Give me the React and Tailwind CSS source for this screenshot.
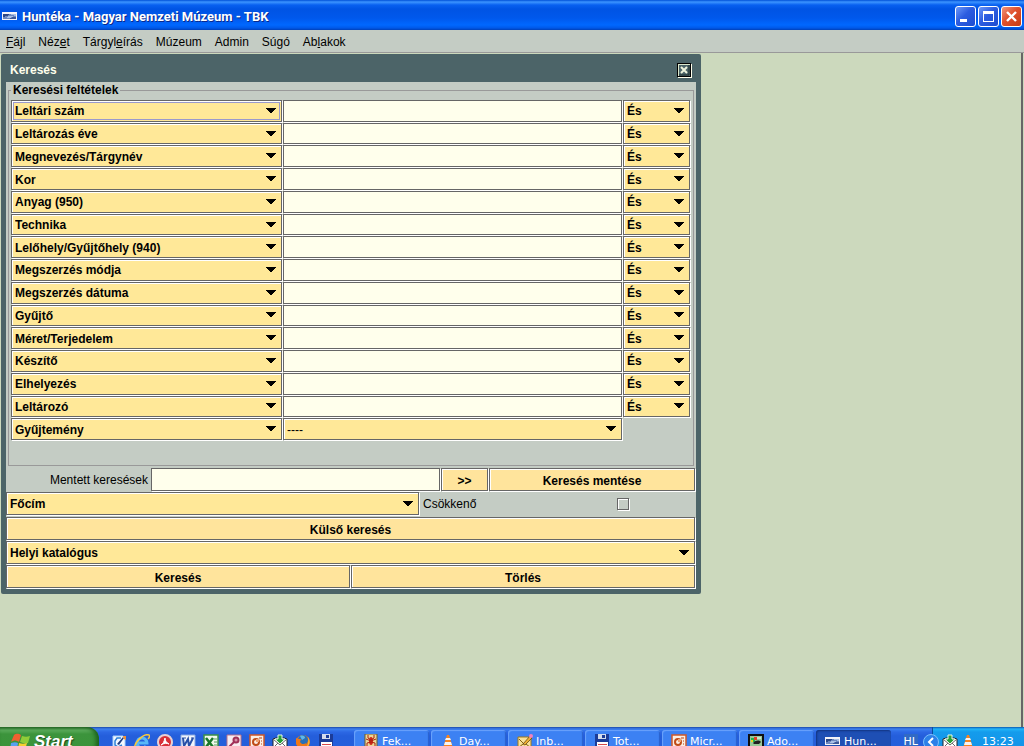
import React, { useState } from "react";

const fields = [
  "Leltári szám",
  "Leltározás éve",
  "Megnevezés/Tárgynév",
  "Kor",
  "Anyag (950)",
  "Technika",
  "Lelőhely/Gyűjtőhely (940)",
  "Megszerzés módja",
  "Megszerzés dátuma",
  "Gyűjtő",
  "Méret/Terjedelem",
  "Készítő",
  "Elhelyezés",
  "Leltározó",
];

// before / underlined mnemonic / after
const menus = [
  ["", "F", "ájl"],
  ["Néz", "e", "t"],
  ["Tárgyl", "e", "írás"],
  ["Múzeum", "", ""],
  ["Admin", "", ""],
  ["Súgó", "", ""],
  ["Ab", "l", "akok"],
];

const bevel =
  "border border-[#666666] shadow-[1px_1px_0_#ffffff,inset_1px_1px_0_#ffffff]";

const Combo = ({ value, label, className = "", weight = "font-bold", focused }) => (
  <div className={`relative min-h-0 ${className}`}>
    <select
      aria-label={label || value}
      defaultValue={value}
      className={`block h-full w-full appearance-none rounded-none bg-[#ffe898] pt-px pl-[3px] text-xs leading-4 text-black outline-none ${weight} ${bevel}`}
    >
      <option>{value}</option>
    </select>
    {focused && (
      <span className="pointer-events-none absolute inset-[2px] border border-[#9999cc]" />
    )}
    <svg
      className="pointer-events-none absolute top-1/2 right-[6px] -mt-[3px] h-[5px] w-[10px]"
      viewBox="0 0 10 5"
      shapeRendering="crispEdges"
    >
      <path d="M0 0h10v1H9v1H8v1H7v1H6v1H4V4H3V3H2V2H1V1H0z" fill="#000" />
    </svg>
  </div>
);

const TextBox = ({ label, className = "", id }) => (
  <input
    id={id}
    type="text"
    aria-label={label}
    className={`block h-full min-h-0 w-full min-w-0 rounded-none border border-[#666666] bg-[#ffffec] px-1 text-xs shadow-[1px_1px_0_#ffffff] outline-none ${className}`}
  />
);

const Button = ({ children, className = "" }) => (
  <button
    type="button"
    className={`h-[23px] bg-[#ffe49c] pt-[2px] text-xs leading-4 font-bold text-black ${bevel} ${className}`}
  >
    {children}
  </button>
);

const AppIcon = () => (
  <svg className="h-[9px] w-4 shrink-0" viewBox="0 0 16 9" shapeRendering="crispEdges">
    <path d="M0 0h15v8H0z" fill="#f4f4f8" />
    <path d="M1 2h13v5H1z" fill="#6c88c0" />
    <path d="M1 2h6v1H6v1H3v1H1z" fill="#2c4888" />
    <path d="M9 2h5v2h-2V3H9z" fill="#a8c0e4" />
    <path d="M6 4h5v1H9v1H5V5h1z" fill="#a8c0e4" />
    <path d="M10 5h4v2H8V6h2z" fill="#3c5898" />
  </svg>
);

const PageIcon = () => (
  <svg className="size-4 shrink-0" viewBox="0 0 16 16">
    <path d="M2 2h10l2 2v11H2z" fill="#f4f8ff" stroke="#a8d0f8" />
    <path d="M10 4H6L4 7v4l3 2 4-2" fill="none" stroke="#2c80d8" strokeWidth="1.500" />
    <path d="M6 10l6-7 1 1-5 7z" fill="#203c80" />
    <path d="M12 2h3v4l-2-1z" fill="#f09038" />
  </svg>
);

const IeIcon = () => (
  <svg className="size-4 shrink-0" viewBox="0 0 16 16">
    <path d="M3 9h10a5 5 0 1 0-1 3" fill="none" stroke="#58b8f8" strokeWidth="3" />
    <path d="M1 15C-1 10 9-1 15 1c1 1 0 3-1 4" fill="none" stroke="#f8c83c" strokeWidth="1.500" />
  </svg>
);

const AcrobatIcon = () => (
  <svg className="size-4 shrink-0" viewBox="0 0 16 16">
    <circle cx="8" cy="8" r="7" fill="#d83038" stroke="#e8d0d4" strokeWidth="2" />
    <path d="M8 4c-1 4-2 6-4 7 3-2 6-2 8-1-2-1-4-3-4-6z" fill="#fff" stroke="#fff" />
  </svg>
);

const WordIcon = () => (
  <svg className="size-4 shrink-0" viewBox="0 0 16 16">
    <path d="M1 1h14v14H1z" fill="#f0f4fc" stroke="#88a8e0" />
    <path d="M3 4l1 8 4-7 1 7 4-8" fill="none" stroke="#2850a8" strokeWidth="2" />
    <path d="M2 4h4M11 4h3" stroke="#2850a8" />
  </svg>
);

const ExcelIcon = () => (
  <svg className="size-4 shrink-0" viewBox="0 0 16 16">
    <path d="M1 1h14v14H1z" fill="#f0f8ec" stroke="#3c9048" strokeWidth="1.500" />
    <path d="M3 4l7 9M10 4l-7 9" stroke="#187828" strokeWidth="2.500" />
    <path d="M11 5h3M11 8h3M11 11h3" stroke="#58a060" />
  </svg>
);

const AccessIcon = () => (
  <svg className="size-4 shrink-0" viewBox="0 0 16 16">
    <path d="M1 1h14v14H1z" fill="#f8ecf0" stroke="#b87088" />
    <circle cx="10" cy="6" r="2.500" fill="#d890a8" stroke="#a03058" strokeWidth="2" />
    <path d="M8 8l-5 5" stroke="#a03058" strokeWidth="2" />
  </svg>
);

const PowerPointIcon = () => (
  <svg className="size-4 shrink-0" viewBox="0 0 16 16">
    <path d="M1 1h14v14H1z" fill="#fbeee4" stroke="#d05828" strokeWidth="1.500" />
    <circle cx="7" cy="8" r="3" fill="#fbeee4" stroke="#c04c18" strokeWidth="2" />
    <path d="M7 8V5h3v3z" fill="#f0a070" />
    <path d="M10 4h3M12 7h1M12 10h1" stroke="#b83c10" />
  </svg>
);

const MailIcon = () => (
  <svg className="size-4 shrink-0" viewBox="0 0 16 16">
    <path d="M1 5l3-1h8l3 1v10H1z" fill="#fff" stroke="#222" />
    <path d="M1 5l7 6 7-6M1 14l5-5M15 14l-5-5" fill="none" stroke="#666" />
    <path d="M6 1h4v4h3l-5 5-5-5h3z" fill="#28a038" stroke="#e8f8e8" />
  </svg>
);

const FirefoxIcon = () => (
  <svg className="size-4 shrink-0" viewBox="0 0 16 16">
    <circle cx="8" cy="8" r="7" fill="#f07818" />
    <circle cx="8" cy="6" r="5" fill="#2870b8" />
    <path d="M5 2c3-1 5 0 5 2L7 6z" fill="#60b8e8" />
    <path d="M1 4l2 1h3L5 8c1 2 4 3 6 1 0 3-6 6-10 1z" fill="#f07818" />
    <path d="M13 3c3 4 1 9-2 11 2-3 3-7 2-11z" fill="#f8c030" />
  </svg>
);

const FloppyIcon = () => (
  <svg className="size-4 shrink-0" viewBox="0 0 16 16" shapeRendering="crispEdges">
    <path d="M1 0h13l1 1v15H1z" fill="#1c3c98" />
    <path d="M4 0h8v5H4z" fill="#d4dcec" />
    <path d="M8 1h3v3H8z" fill="#1c3c98" />
    <path d="M3 8h11v8H3z" fill="#fff" />
    <path d="M4 10h9v1H4zM4 13h9v1H4z" fill="#d84848" />
  </svg>
);

const SpiderIcon = () => (
  <svg className="size-4 shrink-0" viewBox="0 0 16 16">
    <path d="M2 0h12v16H2z" fill="#ecd898" stroke="#6c5828" />
    <ellipse cx="8" cy="7" rx="2" ry="4" fill="#d02818" />
    <path d="M5 1v3l3 2M11 1v3L8 6M3 5l5 2M13 5L8 7M4 13V9l4-1M12 13V9L8 8" fill="none" stroke="#b02010" />
  </svg>
);

const ConeIcon = () => (
  <svg className="size-4 shrink-0" viewBox="0 0 16 16">
    <path d="M7 1h2l4 13H3z" fill="#f88420" />
    <path d="M6 4h4l1 2H5zM5 8h6l1 3H4z" fill="#f4f4f4" />
    <path d="M2 12h12l2 3H0z" fill="#e86c10" />
  </svg>
);

const NoteIcon = () => (
  <svg className="size-4 shrink-0" viewBox="0 0 16 16">
    <path d="M1 3h13v12H1z" fill="#f8e098" stroke="#a07818" />
    <path d="M2 5l5 5 3-2M1 14l5-4M14 14l-5-4" fill="none" stroke="#806010" />
    <path d="M6 10l7-8 2 2-7 7z" fill="#f0b030" stroke="#503810" strokeWidth=".7" />
    <circle cx="14" cy="2" r="2" fill="#f080c0" />
  </svg>
);

const PhotoIcon = () => (
  <svg className="size-4 shrink-0" viewBox="0 0 16 16">
    <path d="M1 1h14v14H1z" fill="#98c898" stroke="#101010" strokeWidth="2" />
    <path d="M3 4h4v4H3z" fill="#20b848" />
    <path d="M6 3h3v3H6z" fill="#e04028" />
    <path d="M3 6h2v2H3z" fill="#f0d020" />
    <path d="M5 9c3-3 6-3 8-1l-2 2H6z" fill="#202020" />
    <path d="M9 4h4" stroke="#fff" />
  </svg>
);

const quickLaunch = [
  ["Asztal", PageIcon],
  ["Internet Explorer", IeIcon],
  ["Acrobat", AcrobatIcon],
  ["Word", WordIcon],
  ["Excel", ExcelIcon],
  ["Access", AccessIcon],
  ["PowerPoint", PowerPointIcon],
  ["Levelek", MailIcon],
  ["Firefox", FirefoxIcon],
  ["Total Commander", FloppyIcon],
];

const tasks = [
  ["Fek...", SpiderIcon],
  ["Day...", ConeIcon],
  ["Inb...", NoteIcon],
  ["Tot...", FloppyIcon],
  ["Micr...", PowerPointIcon],
  ["Ado...", PhotoIcon],
  ["Hun...", AppIcon],
];

const TitleBar = () => (
  <header className="flex h-[30px] shrink-0 items-center bg-[linear-gradient(180deg,#0050d8_0,#3c94ff_2px,#0860f0_5px,#0054e4_9px,#0058ec_18px,#0068ff_25px,#0058e8_28px,#0040b8_30px)] pt-[3px] pr-[2px] pl-[2px]">
    <AppIcon />
    <h1 className="ml-1 flex-1 font-[Roboto,'Open_Sans',sans-serif] text-[13px] leading-4 font-bold text-white [text-shadow:1px_1px_0_#0a2a8c]">
      Huntéka - Magyar Nemzeti Múzeum - TBK
    </h1>
    <div className="flex gap-[2px]">
      <button
        type="button"
        aria-label="Kis méret"
        className="size-[21px] rounded-[3px] border border-white bg-[linear-gradient(135deg,#6c98f8,#2c5ce0_45%,#1c4cd0)]"
      >
        <svg className="size-full" viewBox="0 0 19 19" shapeRendering="crispEdges">
          <path d="M4 12h7v3H4z" fill="#fff" />
        </svg>
      </button>
      <button
        type="button"
        aria-label="Teljes méret"
        className="size-[21px] rounded-[3px] border border-white bg-[linear-gradient(135deg,#6c98f8,#2c5ce0_45%,#1c4cd0)]"
      >
        <svg className="size-full" viewBox="0 0 19 19" shapeRendering="crispEdges">
          <path d="M4 4h11v11H4zM5 7v7h9V7z" fill="#fff" fillRule="evenodd" />
        </svg>
      </button>
      <button
        type="button"
        aria-label="Bezárás"
        className="size-[21px] rounded-[3px] border border-white bg-[linear-gradient(135deg,#f0957c,#e0502c_45%,#c83c14)]"
      >
        <svg className="size-full" viewBox="0 0 19 19">
          <path d="M5 5l9 9M14 5l-9 9" stroke="#fff" strokeWidth="2.400" />
        </svg>
      </button>
    </div>
  </header>
);

const MenuBar = () => (
  <nav className="flex h-[23px] shrink-0 items-center gap-[13px] border-b border-[#999999] bg-[#c4ccc4] pt-px pl-[6px] text-xs leading-4">
    {menus.map(([before, key, after]) => (
      <button type="button" key={before + key + after}>
        {before}
        <span className="underline underline-offset-1">{key}</span>
        {after}
      </button>
    ))}
  </nav>
);

const SearchWindow = () => {
  const [descending, setDescending] = useState(false);

  return (
    <section className="w-[700px] max-w-full rounded-[2px] bg-[#4c6468] px-[5px] pb-[5px]">
      <div className="flex h-7 items-center justify-between pt-1 pr-[5px] pl-1">
        <h2 className="text-xs leading-4 font-bold text-[#ffffec]">Keresés</h2>
        <button
          type="button"
          aria-label="Ablak bezárása"
          className="size-[14px] border border-black bg-[#4c6468] shadow-[1px_1px_0_#ffffec,inset_1px_1px_0_#dce8cc]"
        >
          <svg className="size-full" viewBox="0 0 12 12">
            <path d="M11 1v10H1" fill="none" stroke="#1c2c2c" />
            <path d="M3 3l6 6M9 3L3 9" stroke="#eef4dc" strokeWidth="2" />
          </svg>
        </button>
      </div>

      <div className="bg-[#c4ccc4] pb-[1px]">
        <div className="px-[2px] pb-[2px]">
          <fieldset className="border border-[#999999] px-[2px] pb-[25px]">
            <legend className="ml-0 px-[2px] text-xs leading-[17px] font-bold">
              Keresési feltételek
            </legend>
            <div className="mt-px grid h-[340px] auto-rows-fr grid-cols-[271px_1fr_67px] gap-px pr-px">
              {fields.map((field, index) => (
                <React.Fragment key={field}>
                  <Combo value={field} focused={index === 0} />
                  <TextBox label={field} />
                  <Combo value="És" label={`${field} kapcsolat`} />
                </React.Fragment>
              ))}
              <Combo value="Gyűjtemény" />
              <Combo value="----" label="Gyűjtemény értéke" weight="font-normal" />
            </div>
          </fieldset>
        </div>

        <div className="flex h-[23px] gap-px pr-px">
          <label
            htmlFor="saved"
            className="w-[144px] shrink-0 self-center pt-px pr-[2px] text-right text-xs leading-4"
          >
            Mentett keresések
          </label>
          <TextBox id="saved" label="Mentett keresések" className="flex-1" />
          <Button className="w-[47px] shrink-0">&gt;&gt;</Button>
          <Button className="w-[206px] shrink-0">Keresés mentése</Button>
        </div>

        <div className="mt-px flex h-[23px] items-center">
          <Combo value="Főcím" label="Rendezés" className="h-full w-[413px] shrink-0" />
          <label htmlFor="desc" className="ml-1 flex-1 pt-px text-xs leading-4">
            Csökkenő
          </label>
          <input
            id="desc"
            type="checkbox"
            checked={descending}
            onChange={(e) => setDescending(e.target.checked)}
            className="mr-[67px] size-3 appearance-none border border-[#666666] shadow-[1px_1px_0_#ffffff,inset_1px_1px_0_#ffffff] checked:bg-[#666666]"
          />
        </div>

        <div className="mt-[2px] flex flex-col gap-px pr-px">
          <Button>Külső keresés</Button>
          <Combo value="Helyi katalógus" label="Katalógus" className="h-[23px]" />
          <div className="flex gap-px">
            <Button className="flex-1">Keresés</Button>
            <Button className="flex-1">Törlés</Button>
          </div>
        </div>
      </div>
    </section>
  );
};

const Taskbar = () => (
  <footer className="h-[19px] shrink-0 overflow-hidden bg-[#245edb] font-['DejaVu_Sans','Noto_Sans',sans-serif]">
    <div className="flex h-[29px] items-center bg-[linear-gradient(180deg,#1c48a8_0,#3c80f0_2px,#2c68e4_5px,#245edb_9px,#2460dc_26px,#1c48b0_30px)]">
      <button
        type="button"
        className="flex h-full w-[99px] shrink-0 items-center gap-1 rounded-r-xl bg-[linear-gradient(180deg,#2c6c2c_0,#5cac5c_3px,#3c943c_7px,#3a933a_24px,#2c702c_30px)] pl-[10px] shadow-[inset_-3px_0_4px_#1c601c]"
      >
        <svg className="size-5" viewBox="0 0 20 20">
          <path d="M4 3c3-2 5-1 7 0L9 10C6 8 4 8 1 10z" fill="#f06030" />
          <path d="M12 4c3 1 5 1 8 0l-2 7c-3 1-5 0-8-1z" fill="#90cc38" />
          <path d="M1 11c3-1 5-1 7 0l-1 7c-3-2-5-1-7 0z" fill="#58a0f0" />
          <path d="M9 11c3 1 5 1 8 0l-2 7c-3 1-5 0-7-1z" fill="#f8d030" />
        </svg>
        <span className="font-['Liberation_Sans',sans-serif] text-[17px] leading-5 font-bold text-white italic [text-shadow:1px_1px_1px_#1c481c]">
          Start
        </span>
      </button>

      <div className="ml-3 flex w-[243px] shrink-0 gap-[7px]">
        {quickLaunch.map(([name, Icon]) => (
          <button type="button" key={name} aria-label={name}>
            <Icon />
          </button>
        ))}
      </div>

      <div className="flex h-full min-w-0 flex-1 items-center gap-[2px] pt-[3px] pb-[3px]">
        {tasks.map(([name, Icon]) => (
          <button
            type="button"
            key={name}
            className={`flex h-full w-[75px] items-center gap-[3px] rounded-[3px] pl-[9px] text-[11px] leading-4 text-white ${
              name === "Hun..."
                ? "bg-[#1e4fb4] shadow-[inset_1px_1px_2px_#123480]"
                : "bg-[#3c81f3] shadow-[inset_1px_1px_1px_#6ca4fc,inset_-1px_0_1px_#2860cc]"
            }`}
          >
            <Icon />
            {name}
          </button>
        ))}
      </div>

      <span className="mr-[14px] bg-[#316ac5] text-[11px] leading-4 text-white">HL</span>
      <div className="flex h-full w-[92px] shrink-0 items-center border-l border-[#0c4c9c] bg-[linear-gradient(180deg,#0c58b0_0,#20b4f8_2px,#149cec_5px,#1290e8_26px,#0c70c0_30px)]">
        <button
          type="button"
          aria-label="Rejtett ikonok"
          className="-ml-[10px] size-4 shrink-0 rounded-full border border-[#7cc0fc] bg-[#2c80e8]"
        >
          <svg className="size-full" viewBox="0 0 14 14">
            <path d="M9 3L5 7l4 4" fill="none" stroke="#fff" strokeWidth="2" />
          </svg>
        </button>
        <div className="ml-[3px] flex gap-[2px]">
          <MailIcon />
          <ConeIcon />
        </div>
        <span className="ml-[6px] text-[11px] leading-4 text-white">13:23</span>
      </div>
    </div>
  </footer>
);

const App = () => {
  return (
    <div className="flex h-screen flex-col overflow-hidden bg-[#ccd9bd] font-['Liberation_Sans',Arial,sans-serif] text-black">
      <TitleBar />
      <MenuBar />
      <main className="min-h-0 flex-1 pr-px">
        <div className="h-full border-r-2 border-[#666666] pt-px pl-px">
          <SearchWindow />
        </div>
      </main>
      <Taskbar />
    </div>
  );
};

export default App;
